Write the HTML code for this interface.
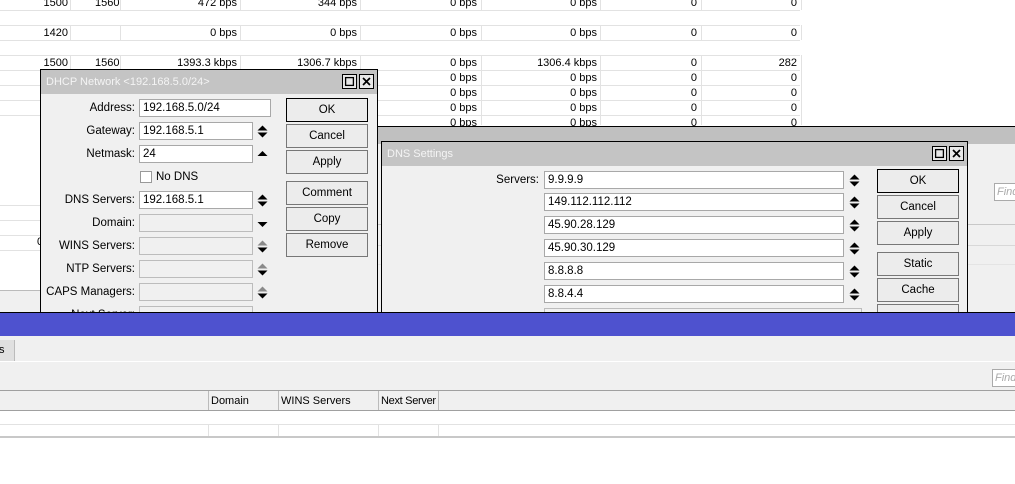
<!DOCTYPE html>
<html><head><style>
*{margin:0;padding:0;box-sizing:border-box}
body{width:1015px;height:484px;overflow:hidden;background:#fff;font-family:"Liberation Sans",sans-serif;font-size:11px;color:#000;position:relative}
.a{position:absolute}
.hl{position:absolute;height:1px;background:#e2e2e2}
.vl{position:absolute;width:1px;background:#e2e2e2}
.t{position:absolute;text-align:right;line-height:13px;white-space:nowrap}
.win{position:absolute;background:#f0f0f0;border:1px solid #000}
.title{position:absolute;left:0;right:0;top:0;height:23px;background:#c4c4c4;color:#f4f4f4;font-size:11px;line-height:24px;padding-left:5px}
.tb{position:absolute;top:4px;width:15px;height:15px;border:1px solid #000;background:#e8e8e8}
.btn{position:absolute;width:82px;height:24px;border:1px solid #777;background:#ececec;text-align:center;line-height:22px;font-size:11.5px}
.fld{position:absolute;height:18px;border:1px solid #a8a8a8;background:#fff;line-height:16px;padding-left:3px;font-size:11.5px}
.fld.d{background:#f0f0f0;border-color:#bcbcbc}
.lbl{position:absolute;text-align:right;line-height:18px;font-size:11.5px;width:130px}
.ar{position:absolute;width:11px;height:13px}
</style></head><body>
<svg width="0" height="0" style="position:absolute">
<defs>
<symbol id="ud" viewBox="0 0 11 13"><path d="M0.5 5.5L5.5 0.5L10.5 5.5Z" fill="#000"/><path d="M0.5 7.5L10.5 7.5L5.5 12.5Z" fill="#000"/></symbol>
<symbol id="gd" viewBox="0 0 11 13"><path d="M0.5 5.5L5.5 0.5L10.5 5.5Z" fill="#8a8a8a"/><path d="M0.5 7.5L10.5 7.5L5.5 12.5Z" fill="#000"/></symbol>
<symbol id="u" viewBox="0 0 11 13"><path d="M0.5 8L5.5 3L10.5 8Z" fill="#000"/></symbol>
<symbol id="d" viewBox="0 0 11 13"><path d="M0.5 4L10.5 4L5.5 9Z" fill="#000"/></symbol>
<symbol id="mx" viewBox="0 0 15 15"><rect x="3" y="3" width="9" height="9" fill="none" stroke="#000" stroke-width="1.5"/></symbol>
<symbol id="cl" viewBox="0 0 15 15"><path d="M3.5 3.5L11.5 11.5M11.5 3.5L3.5 11.5" stroke="#000" stroke-width="2"/></symbol>
</defs></svg>
<!-- background table -->
<div class="hl" style="left:0;width:800px;top:10px"></div>
<div class="hl" style="left:0;width:800px;top:25px"></div>
<div class="hl" style="left:0;width:800px;top:40px"></div>
<div class="hl" style="left:0;width:800px;top:55px"></div>
<div class="hl" style="left:0;width:800px;top:70px"></div>
<div class="hl" style="left:0;width:800px;top:85px"></div>
<div class="hl" style="left:0;width:800px;top:100px"></div>
<div class="hl" style="left:0;width:800px;top:115px"></div>
<div class="hl" style="left:0;width:40px;top:205px"></div>
<div class="hl" style="left:0;width:40px;top:220px"></div>
<div class="hl" style="left:0;width:40px;top:235px"></div>
<div class="hl" style="left:0;width:40px;top:250px"></div>
<div class="vl" style="left:70px;top:0;height:10px"></div><div class="vl" style="left:70px;top:25px;height:15px"></div><div class="vl" style="left:70px;top:55px;height:15px"></div>
<div class="vl" style="left:120px;top:0;height:10px"></div><div class="vl" style="left:120px;top:25px;height:15px"></div><div class="vl" style="left:120px;top:55px;height:15px"></div>
<div class="vl" style="left:240px;top:0;height:10px"></div><div class="vl" style="left:240px;top:25px;height:15px"></div><div class="vl" style="left:240px;top:55px;height:15px"></div>
<div class="vl" style="left:360px;top:0;height:10px"></div><div class="vl" style="left:360px;top:25px;height:15px"></div><div class="vl" style="left:360px;top:55px;height:15px"></div>
<div class="vl" style="left:481px;top:0;height:10px"></div><div class="vl" style="left:481px;top:25px;height:15px"></div><div class="vl" style="left:481px;top:55px;height:70px"></div>
<div class="vl" style="left:600px;top:0;height:10px"></div><div class="vl" style="left:600px;top:25px;height:15px"></div><div class="vl" style="left:600px;top:55px;height:70px"></div>
<div class="vl" style="left:701px;top:0;height:10px"></div><div class="vl" style="left:701px;top:25px;height:15px"></div><div class="vl" style="left:701px;top:55px;height:70px"></div>
<div class="vl" style="left:801px;top:0;height:10px"></div><div class="vl" style="left:801px;top:25px;height:15px"></div><div class="vl" style="left:801px;top:55px;height:70px"></div>

<div class="t" style="right:947px;top:-3px">1500</div><div class="t" style="left:95px;top:-3px">1560</div>
<div class="t" style="right:778px;top:-3px">472 bps</div><div class="t" style="right:658px;top:-3px">344 bps</div>
<div class="t" style="right:538px;top:-3px">0 bps</div><div class="t" style="right:418px;top:-3px">0 bps</div><div class="t" style="right:318px;top:-3px">0</div><div class="t" style="right:218px;top:-3px">0</div>
<div class="t" style="right:947px;top:27px">1420</div>
<div class="t" style="right:778px;top:27px">0 bps</div><div class="t" style="right:658px;top:27px">0 bps</div>
<div class="t" style="right:538px;top:27px">0 bps</div><div class="t" style="right:418px;top:27px">0 bps</div><div class="t" style="right:318px;top:27px">0</div><div class="t" style="right:218px;top:27px">0</div>
<div class="t" style="right:947px;top:57px">1500</div><div class="t" style="left:95px;top:57px">1560</div>
<div class="t" style="right:778px;top:57px">1393.3 kbps</div><div class="t" style="right:658px;top:57px">1306.7 kbps</div>
<div class="t" style="right:538px;top:57px">0 bps</div><div class="t" style="right:418px;top:57px">1306.4 kbps</div><div class="t" style="right:318px;top:57px">0</div><div class="t" style="right:218px;top:57px">282</div>
<div class="t" style="right:538px;top:72px">0 bps</div><div class="t" style="right:418px;top:72px">0 bps</div><div class="t" style="right:318px;top:72px">0</div><div class="t" style="right:218px;top:72px">0</div>
<div class="t" style="right:538px;top:87px">0 bps</div><div class="t" style="right:418px;top:87px">0 bps</div><div class="t" style="right:318px;top:87px">0</div><div class="t" style="right:218px;top:87px">0</div>
<div class="t" style="right:538px;top:102px">0 bps</div><div class="t" style="right:418px;top:102px">0 bps</div><div class="t" style="right:318px;top:102px">0</div><div class="t" style="right:218px;top:102px">0</div>
<div class="t" style="right:538px;top:117px">0 bps</div><div class="t" style="right:418px;top:117px">0 bps</div><div class="t" style="right:318px;top:117px">0</div><div class="t" style="right:218px;top:117px">0</div>
<div class="t" style="left:37px;top:236px">0</div>
<div class="a" style="left:0;top:290px;width:40px;height:23px;background:#f0f0f0;border-top:1px solid #bbb"></div>

<!-- window behind DNS -->
<div class="a" style="left:376px;top:126px;width:640px;height:188px;background:#f0f0f0;border-top:1px solid #000;border-left:1px solid #000">
 <div class="a" style="left:0;top:0;right:0;height:17px;background:#c0c0c0"></div>
 <div class="a" style="left:0;top:97px;right:0;height:1px;background:#c8c8c8"></div>
 <div class="a" style="left:0;top:118px;right:0;height:1px;background:#d8d8d8"></div>
 <div class="a" style="left:0;top:137px;right:0;height:1px;background:#e4e4e4"></div>
 <div class="a" style="left:617px;top:56px;width:30px;height:18px;border:1px solid #aaa;background:#fff;color:#aaa;font-style:italic;padding-left:2px;line-height:16px">Find</div>
</div>

<!-- DHCP window -->
<div class="win" style="left:40px;top:69px;width:338px;height:250px">
 <div class="title" style="height:24px">DHCP Network &lt;192.168.5.0/24&gt;</div>
 <svg class="tb" style="left:301px"><use href="#mx"/></svg><svg class="tb" style="left:318px"><use href="#cl"/></svg>
 <div class="lbl" style="left:-36px;top:29px">Address:</div><div class="fld" style="left:98px;top:29px;width:132px">192.168.5.0/24</div>
 <div class="lbl" style="left:-36px;top:52px">Gateway:</div><div class="fld" style="left:98px;top:52px;width:114px">192.168.5.1</div><svg class="ar" style="left:216px;top:55px"><use href="#ud"/></svg>
 <div class="lbl" style="left:-36px;top:75px">Netmask:</div><div class="fld" style="left:98px;top:75px;width:114px">24</div><svg class="ar" style="left:216px;top:78px"><use href="#u"/></svg>
 <div class="a" style="left:99px;top:101px;width:12px;height:12px;border:1px solid #999;background:#fff"></div><div class="a" style="left:115px;top:99px;font-size:11.5px;line-height:16px">No DNS</div>
 <div class="lbl" style="left:-36px;top:121px">DNS Servers:</div><div class="fld" style="left:98px;top:121px;width:114px">192.168.5.1</div><svg class="ar" style="left:216px;top:124px"><use href="#ud"/></svg>
 <div class="lbl" style="left:-36px;top:144px">Domain:</div><div class="fld d" style="left:98px;top:144px;width:114px"></div><svg class="ar" style="left:216px;top:148px"><use href="#d"/></svg>
 <div class="lbl" style="left:-36px;top:167px">WINS Servers:</div><div class="fld d" style="left:98px;top:167px;width:114px"></div><svg class="ar" style="left:216px;top:170px"><use href="#gd"/></svg>
 <div class="lbl" style="left:-36px;top:190px">NTP Servers:</div><div class="fld d" style="left:98px;top:190px;width:114px"></div><svg class="ar" style="left:216px;top:193px"><use href="#gd"/></svg>
 <div class="lbl" style="left:-36px;top:213px">CAPS Managers:</div><div class="fld d" style="left:98px;top:213px;width:114px"></div><svg class="ar" style="left:216px;top:216px"><use href="#gd"/></svg>
 <div class="lbl" style="left:-36px;top:236px">Next Server:</div><div class="fld d" style="left:98px;top:236px;width:114px"></div>
 <div class="btn" style="left:245px;top:28px;border:1px solid #000">OK</div>
 <div class="btn" style="left:245px;top:54px">Cancel</div>
 <div class="btn" style="left:245px;top:80px">Apply</div>
 <div class="btn" style="left:245px;top:111px">Comment</div>
 <div class="btn" style="left:245px;top:137px">Copy</div>
 <div class="btn" style="left:245px;top:163px">Remove</div>
</div>

<!-- DNS window -->
<div class="win" style="left:381px;top:141px;width:587px;height:180px">
 <div class="title" style="height:24px">DNS Settings</div>
 <svg class="tb" style="left:550px"><use href="#mx"/></svg><svg class="tb" style="left:567px"><use href="#cl"/></svg>
 <div class="lbl" style="left:27px;top:29px">Servers:</div>
 <div class="fld" style="left:162px;top:29px;width:300px">9.9.9.9</div><svg class="ar" style="left:467px;top:32px"><use href="#ud"/></svg>
 <div class="fld" style="left:162px;top:51px;width:300px">149.112.112.112</div><svg class="ar" style="left:467px;top:54px"><use href="#ud"/></svg>
 <div class="fld" style="left:162px;top:74px;width:300px">45.90.28.129</div><svg class="ar" style="left:467px;top:77px"><use href="#ud"/></svg>
 <div class="fld" style="left:162px;top:97px;width:300px">45.90.30.129</div><svg class="ar" style="left:467px;top:100px"><use href="#ud"/></svg>
 <div class="fld" style="left:162px;top:120px;width:300px">8.8.8.8</div><svg class="ar" style="left:467px;top:123px"><use href="#ud"/></svg>
 <div class="fld" style="left:162px;top:143px;width:300px">8.8.4.4</div><svg class="ar" style="left:467px;top:146px"><use href="#ud"/></svg>
 <div class="fld d" style="left:162px;top:166px;width:318px"></div>
 <div class="btn" style="left:495px;top:27px;border:1px solid #000">OK</div>
 <div class="btn" style="left:495px;top:53px">Cancel</div>
 <div class="btn" style="left:495px;top:79px">Apply</div>
 <div class="btn" style="left:495px;top:110px">Static</div>
 <div class="btn" style="left:495px;top:136px">Cache</div>
 <div class="btn" style="left:495px;top:162px"></div>
</div>

<!-- bottom window -->
<div class="a" style="left:0;top:312px;width:1015px;height:1px;background:#000"></div>
<div class="a" style="left:0;top:313px;width:1015px;height:23px;background:#4e52cf"></div>
<div class="a" style="left:0;top:336px;width:1015px;height:100px;background:#f0f0f0"></div>
<div class="a" style="left:0;top:340px;width:15px;height:21px;background:#e0e0e0;border-right:1px solid #bbb;line-height:21px;font-size:11px;text-indent:-4px;overflow:hidden">ts</div>
<div class="a" style="left:0;top:361px;width:1015px;height:1px;background:#fff"></div>
<div class="a" style="left:992px;top:369px;width:30px;height:18px;border:1px solid #aaa;background:#fff;color:#aaa;font-style:italic;padding-left:2px;line-height:16px">Find</div>
<div class="a" style="left:0;top:390px;width:1015px;height:1px;background:#a0a0a0"></div>
<div class="a" style="left:0;top:410px;width:1015px;height:1px;background:#a0a0a0"></div>
<div class="a" style="left:208px;top:391px;width:70px;height:19px;border-left:1px solid #bbb;padding-left:2px;line-height:21px;font-size:11px">Domain</div>
<div class="a" style="left:278px;top:391px;width:100px;height:19px;border-left:1px solid #bbb;padding-left:2px;line-height:21px;font-size:11px">WINS Servers</div>
<div class="a" style="left:378px;top:391px;width:61px;height:19px;border-left:1px solid #bbb;border-right:1px solid #bbb;padding-left:2px;line-height:21px;font-size:11px;letter-spacing:-0.3px;white-space:nowrap;overflow:hidden">Next Server</div>
<div class="a" style="left:0;top:411px;width:1015px;height:25px;background:#fff"></div>
<div class="a" style="left:0;top:424px;width:1015px;height:1px;background:#e2e2e2"></div>
<div class="vl" style="left:208px;top:424px;height:12px"></div><div class="vl" style="left:278px;top:424px;height:12px"></div><div class="vl" style="left:378px;top:424px;height:12px"></div><div class="vl" style="left:438px;top:424px;height:12px"></div>
<div class="a" style="left:0;top:436px;width:1015px;height:2px;background:#c8c8c8"></div>
<div class="a" style="left:0;top:438px;width:1015px;height:46px;background:#fff"></div>
</body></html>
